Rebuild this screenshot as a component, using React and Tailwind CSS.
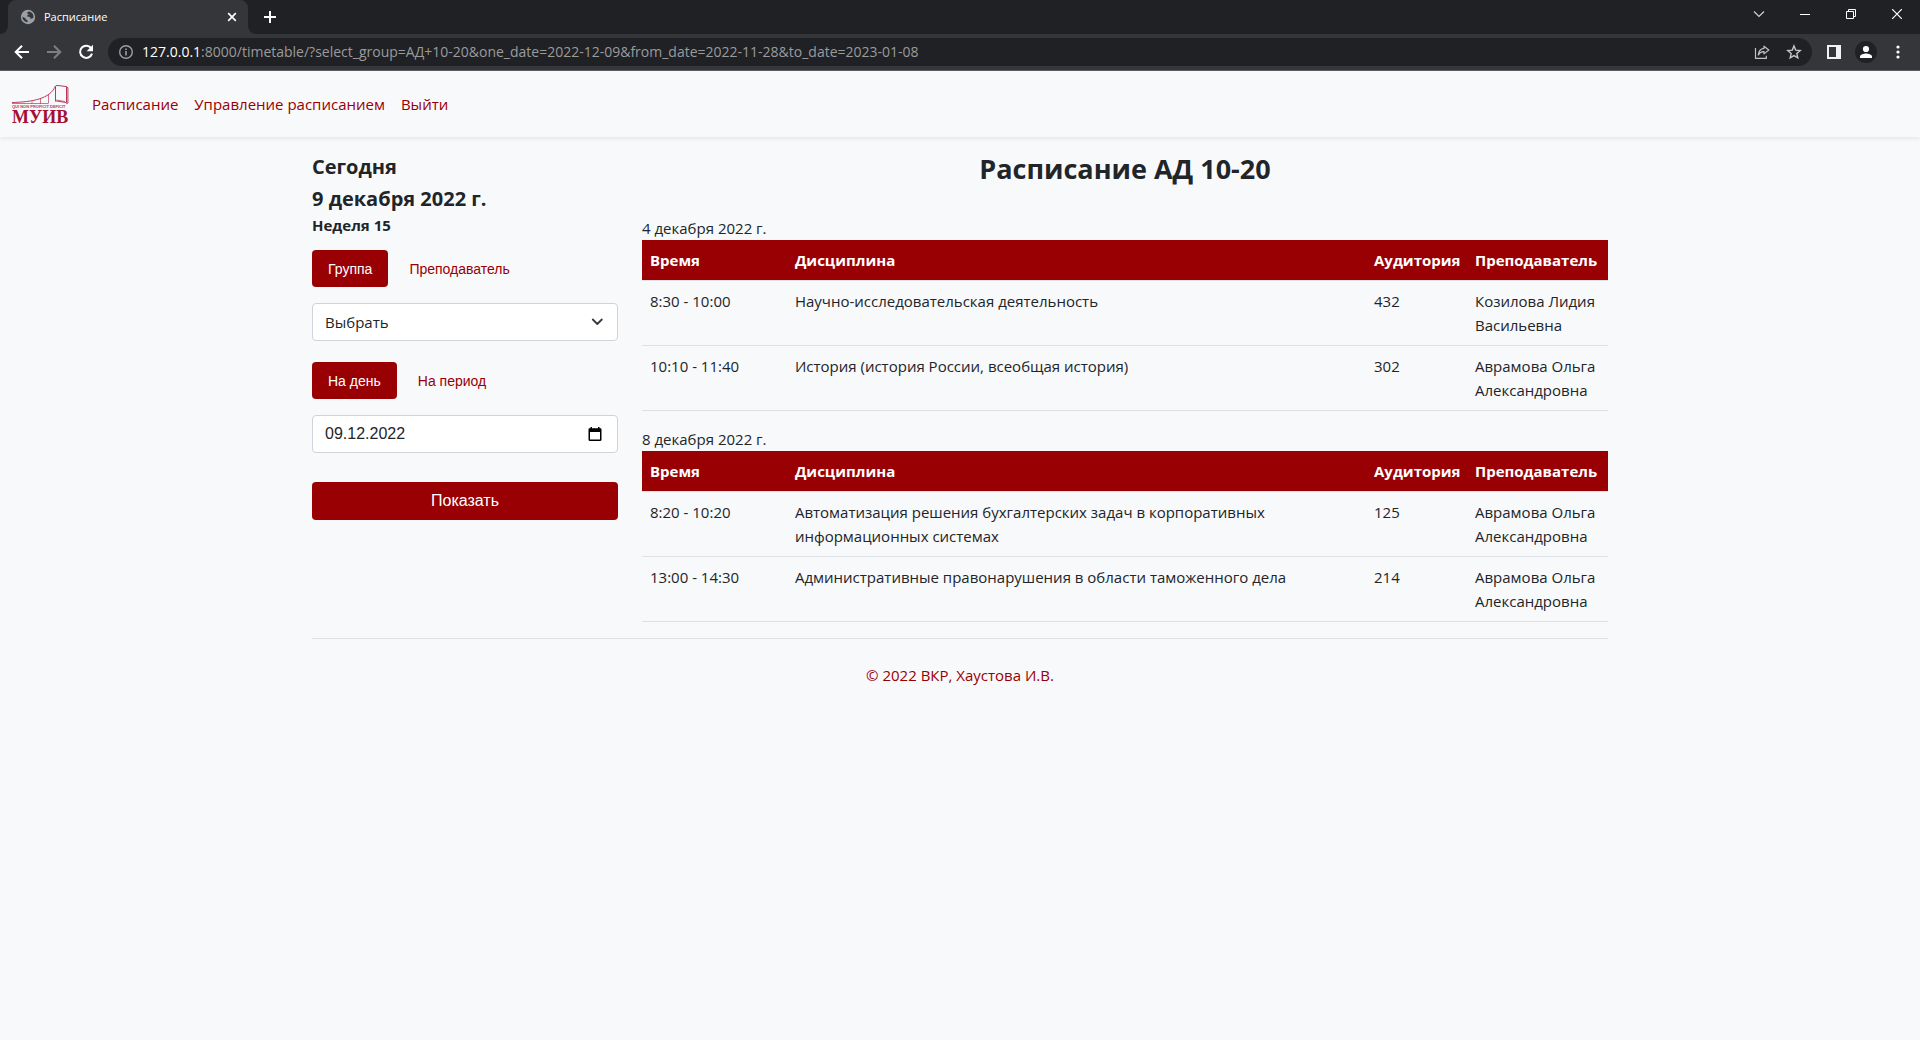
import React, { useState } from "react";

const schedule = [
  {
    date: "4 декабря 2022 г.",
    rows: [
      ["8:30 - 10:00", "Научно-исследовательская деятельность", "432", "Козилова Лидия Васильевна"],
      ["10:10 - 11:40", "История (история России, всеобщая история)", "302", "Аврамова Ольга Александровна"],
    ],
  },
  {
    date: "8 декабря 2022 г.",
    rows: [
      ["8:20 - 10:20", "Автоматизация решения бухгалтерских задач в корпоративных информационных системах", "125", "Аврамова Ольга Александровна"],
      ["13:00 - 14:30", "Административные правонарушения в области таможенного дела", "214", "Аврамова Ольга Александровна"],
    ],
  },
];

function IconButton({ label, className = "", children }) {
  return (
    <button type="button" aria-label={label} className={`flex shrink-0 items-center justify-center ${className}`}>
      {children}
    </button>
  );
}

function TabStrip() {
  return (
    <div className="flex h-[34px] items-stretch bg-[#202124] text-white">
      <div className="relative ml-2 flex w-60 items-center rounded-t-lg bg-[#35363a] pr-2 pl-3">
        <svg className="absolute bottom-0 -left-2 h-2 w-2" viewBox="0 0 8 8"><path d="M8 0v8H0a8 8 0 0 0 8-8z" fill="#35363a" /></svg>
        <svg className="absolute -right-2 bottom-0 h-2 w-2" viewBox="0 0 8 8"><path d="M0 0v8h8a8 8 0 0 1-8-8z" fill="#35363a" /></svg>
        <svg width="16" height="16" viewBox="0 0 16 16">
          <circle cx="8" cy="8" r="7.2" fill="#9aa0a6" />
          <path d="M9 2.6c-1.200.2-1.900.8-1.800 1.600.1.700 1.300.5 1.300 1.300 0 .9-1.600.6-1.700 1.500-.1.700.8.7 2 .7 1.300 0 1.500.8 1.500 1.500s1 .6 1.800.4c.8-.2 1.200-.8 1.400-1.300A5.700 5.700 0 0 0 9 2.600zM2.300 7.600c.4.5 1 .7 1.600.9.700.2 1.700.4 1.700 1.200 0 1 .9.900 1.500 1.400.7.600.5 1.200.4 2.200a5.700 5.700 0 0 1-5.200-5.700z" fill="#35363a" />
        </svg>
        <span className="ml-2 flex-1 text-[11px]">Расписание</span>
        <IconButton label="Закрыть вкладку" className="h-4 w-4">
          <svg width="10" height="10" viewBox="0 0 10 10" stroke="#fff" strokeWidth="1.7"><path d="m1.2 1.2 7.6 7.6M8.8 1.2 1.2 8.8" /></svg>
        </IconButton>
      </div>
      <IconButton label="Новая вкладка" className="ml-2 w-7">
        <svg width="12" height="12" viewBox="0 0 12 12" stroke="#fff" strokeWidth="2"><path d="M6 0v12M0 6h12" /></svg>
      </IconButton>
      <div className="ml-auto flex h-7">
        <IconButton label="Поиск вкладок" className="w-[46px]">
          <svg width="12" height="8" viewBox="0 0 12 8" fill="none" stroke="#d0d1d3" strokeWidth="1.2"><path d="m1 1.5 5 5 5-5" /></svg>
        </IconButton>
        <IconButton label="Свернуть" className="w-[46px]">
          <svg width="10" height="10" viewBox="0 0 10 10" stroke="#fff"><path d="M0 5.5h10" /></svg>
        </IconButton>
        <IconButton label="Восстановить" className="w-[46px]">
          <svg width="10" height="10" viewBox="0 0 10 10" fill="none" stroke="#fff"><path d="M.5 2.5h7v7h-7zM2.5 2.5v-2h7v7h-2" /></svg>
        </IconButton>
        <IconButton label="Закрыть" className="w-[46px]">
          <svg width="10" height="10" viewBox="0 0 10 10" stroke="#fff" strokeWidth="1.2"><path d="m0 0 10 10M10 0 0 10" /></svg>
        </IconButton>
      </div>
    </div>
  );
}

function Toolbar() {
  return (
    <div className="flex h-[37px] items-center border-b border-[#5c5d60] bg-[#35363a] px-1.5">
      <IconButton label="Назад" className="w-8">
        <svg width="16" height="16" viewBox="0 0 16 16" fill="none" stroke="#fff" strokeWidth="2"><path d="M15 8H2.5M8 1.7 1.7 8 8 14.3" /></svg>
      </IconButton>
      <IconButton label="Вперёд" className="w-8">
        <svg width="16" height="16" viewBox="0 0 16 16" fill="none" stroke="#7d7e81" strokeWidth="2"><path d="M1 8h12.5M8 1.7 14.3 8 8 14.3" /></svg>
      </IconButton>
      <IconButton label="Обновить" className="w-8">
        <svg width="16" height="16" viewBox="0 0 16 16" fill="none"><path d="M13.4 4.6A6.1 6.1 0 1 0 14 9.6" stroke="#fff" strokeWidth="2" /><path d="M15 .8v6.4H8.6z" fill="#fff" /></svg>
      </IconButton>
      <div className="mx-1.5 flex h-7 flex-1 items-center rounded-full bg-[#202124] pl-2.5 pr-0.5">
        <svg width="16" height="16" viewBox="0 0 16 16" fill="none" stroke="#9aa0a6" strokeWidth="1.4"><circle cx="8" cy="8" r="6.3" /><path d="M8 7v4.5M8 4.4V6" strokeWidth="1.6" /></svg>
        <p className="ml-2 flex-1 text-sm text-[#9a9b9e]">
          <span className="text-white">127.0.0.1</span>:8000/timetable/?select_group=АД+10-20&amp;one_date=2022-12-09&amp;from_date=2022-11-28&amp;to_date=2023-01-08
        </p>
        <IconButton label="Поделиться" className="w-8">
          <svg width="16" height="16" viewBox="0 0 16 16" fill="none" stroke="#bfc1c4" strokeWidth="1.2"><path d="M1.5 4v10.4h10.8v-2.6" /><path d="M10 2.2 14.8 6 10 9.9V7.7C7.6 7.5 5.7 8.6 4.3 11 4.7 7.2 6.4 4.7 10 4.3z" strokeLinejoin="round" /></svg>
        </IconButton>
        <IconButton label="Добавить в закладки" className="w-8">
          <svg width="16" height="16" viewBox="0 0 16 16" fill="none" stroke="#c4c6c9" strokeWidth="1.4"><path d="m8 1.9 1.7 4.2 4.5.4-3.4 3 1 4.4L8 11.6l-3.800 2.300 1-4.400-3.400-3 4.500-.4z" /></svg>
        </IconButton>
      </div>
      <IconButton label="Боковая панель" className="w-8">
        <svg width="14" height="14" viewBox="0 0 14 14"><path d="M0 0h14v14H0zM2 2v10h7V2z" fill="#f1f3f4" fillRule="evenodd" /></svg>
      </IconButton>
      <IconButton label="Профиль" className="w-8">
        <svg width="22" height="22" viewBox="0 0 22 22"><circle cx="11" cy="11" r="11" fill="#202124" /><circle cx="11" cy="8" r="3.1" fill="#fff" /><path d="M5 17v-1.500c0-2 4-3 6-3s6 1 6 3V17z" fill="#fff" /></svg>
      </IconButton>
      <IconButton label="Меню" className="w-8">
        <svg width="4" height="14" viewBox="0 0 4 14" fill="#fff"><circle cx="2" cy="2" r="1.6" /><circle cx="2" cy="7" r="1.6" /><circle cx="2" cy="12" r="1.6" /></svg>
      </IconButton>
    </div>
  );
}

function Logo() {
  return (
    <svg width="58" height="46" viewBox="0 0 58 46" fill="none" stroke="#b83a5a" role="img" aria-label="МУИВ">
      <path d="M0 21.500C20 21 38 18 43.500 5" strokeWidth="1" />
      <path d="M0 22.500h36M20 20.500v2.300M28.500 17.500v5.300M36.500 13v9.500" strokeWidth="0.7" />
      <path d="M43.500 20.500V5.200l1.500-.8 9.500 1.200v16l-11-1.800M54.500 6l1.400.6v15.500l-1.600.6" strokeWidth="1" />
      <path d="M44.500 19 53 20.500" strokeWidth="0.7" />
      <text x="0" y="27" fontSize="4" fontWeight="700" fill="#b83a5a" stroke="none" fontFamily="Liberation Sans, sans-serif">QUI NON PROFICIT DEFICIT</text>
      <text x="0" y="42" fontSize="18" fontWeight="700" fill="#a50d35" stroke="none" fontFamily="Liberation Serif, serif">МУИВ</text>
    </svg>
  );
}

function Navbar() {
  return (
    <nav className="flex h-[66px] items-center bg-[#f8f9fb] pl-3 text-[#990003] shadow-[0_2px_4px_rgba(0,0,0,0.075)]">
      <a href="#home" className="mr-[14px]"><Logo /></a>
      <a href="#timetable" className="px-2">Расписание</a>
      <a href="#manage" className="px-2">Управление расписанием</a>
      <a href="#logout" className="px-2">Выйти</a>
    </nav>
  );
}

function Pills({ items }) {
  const [active, setActive] = useState(0);
  return (
    <div className="flex gap-[5px] font-['Liberation_Sans',sans-serif] text-sm">
      {items.map((item, i) => (
        <button
          key={item}
          type="button"
          onClick={() => setActive(i)}
          className={`h-[37px] rounded px-4 ${i === active ? "bg-[#990003] text-white" : "text-[#990003]"}`}
        >
          {item}
        </button>
      ))}
    </div>
  );
}

function Sidebar() {
  return (
    <aside className="w-1/4 px-3 pt-[18px]">
      <h2 className="text-xl/6 font-bold">Сегодня</h2>
      <h2 className="mt-2 text-xl/6 font-bold">9 декабря 2022 г.</h2>
      <h3 className="mt-1 text-[15px]/5 font-bold">Неделя 15</h3>
      <form className="mt-[15px]" onSubmit={(e) => e.preventDefault()}>
        <Pills items={["Группа", "Преподаватель"]} />
        <div className="relative mt-4">
          <select aria-label="Группа" className="block h-[38px] w-full appearance-none rounded border border-[#ced4da] bg-white px-3">
            <option>Выбрать</option>
          </select>
          <svg className="pointer-events-none absolute top-3 right-3 h-3.5 w-4" viewBox="0 0 16 14" fill="none" stroke="#343a40" strokeWidth="1.8" strokeLinecap="round" strokeLinejoin="round"><path d="m2.800 4.500 4.500 4.500 4.500-4.500" /></svg>
        </div>
        <div className="mt-[21px]">
          <Pills items={["На день", "На период"]} />
        </div>
        <div className="relative mt-4">
          <input type="text" aria-label="Дата" defaultValue="09.12.2022" className="block h-[38px] w-full rounded border border-[#ced4da] bg-white px-3 font-['Liberation_Sans',sans-serif] text-base" />
          <button type="button" aria-label="Открыть календарь" className="absolute top-3 right-4">
            <svg width="14" height="14" viewBox="0 0 14 14"><path d="M2.500 0H4v1.300h6V0h1.500v1.300h.8c.7 0 1.200.5 1.200 1.200v10.300c0 .7-.5 1.200-1.200 1.200H1.700C1 14 .5 13.500.5 12.800V2.500c0-.7.5-1.200 1.200-1.200h.8zM2 5v7.500h10V5z" fill="#000" fillRule="evenodd" /></svg>
          </button>
        </div>
        <button type="submit" className="mt-[29px] h-[38px] w-full rounded bg-[#990003] font-['Liberation_Sans',sans-serif] text-base text-white">Показать</button>
      </form>
    </aside>
  );
}

function DayTable({ date, rows }) {
  return (
    <table className="mb-4 w-full table-fixed text-left">
      <caption className="caption-top text-left">{date}</caption>
      <colgroup>
        <col className="w-[15%]" />
        <col />
        <col className="w-[101px]" />
        <col className="w-[141px]" />
      </colgroup>
      <thead className="border-b border-[#dee2e6] bg-[#990003] text-[15px]/6 text-white">
        <tr>
          {["Время", "Дисциплина", "Аудитория", "Преподаватель"].map((h) => (
            <th key={h} scope="col" className="p-2 font-bold">{h}</th>
          ))}
        </tr>
      </thead>
      <tbody>
        {rows.map((row) => (
          <tr key={row[0]} className="border-b border-[#dee2e6]">
            {row.map((cell) => (
              <td key={cell} className="p-2 align-top">{cell}</td>
            ))}
          </tr>
        ))}
      </tbody>
    </table>
  );
}

export default function App() {
  return (
    <div className="min-h-screen bg-[#f8f9fb] font-['Open_Sans','Noto_Sans',sans-serif] text-[15px]/6 text-[#212529]">
      <TabStrip />
      <Toolbar />
      <Navbar />
      <div className="mx-auto max-w-[1320px]">
        <main className="flex">
          <Sidebar />
          <section className="w-3/4 px-3 pt-[15px]">
            <h1 className="mb-[30px] text-center text-[27px]/[34px] font-bold">Расписание АД 10-20</h1>
            <div className="flex flex-col">
              {schedule.map((day) => (
                <DayTable key={day.date} {...day} />
              ))}
            </div>
          </section>
        </main>
        <footer className="mx-3 border-t border-[#dee2e6] pt-6 text-center text-[#990003]">© 2022 ВКР, Хаустова И.В.</footer>
      </div>
    </div>
  );
}
